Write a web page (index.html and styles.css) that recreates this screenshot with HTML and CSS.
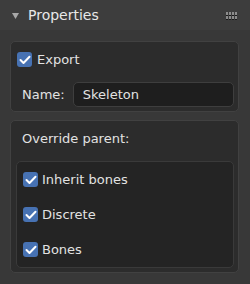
FILE: index.html
```html
<!DOCTYPE html>
<html>
<head>
<meta charset="utf-8">
<link rel="stylesheet" href="styles.css">
</head>
<body>
<div class="panel">
  <div class="header">
    <svg class="tri" width="7" height="6" viewBox="0 0 7 6"><path d="M0 0 L7 0 L3.5 6 Z" fill="#a8a8a8"/></svg>
    <span class="title">Properties</span>
    <svg class="grip" width="12" height="8" viewBox="0 0 12 8">
      <g fill="#8c8c8c">
        <rect x="0" y="0" width="2" height="3"/><rect x="3" y="0" width="2" height="3"/><rect x="6" y="0" width="2" height="3"/><rect x="9" y="0" width="2" height="3"/>
        <rect x="0" y="4" width="2" height="3"/><rect x="3" y="4" width="2" height="3"/><rect x="6" y="4" width="2" height="3"/><rect x="9" y="4" width="2" height="3"/>
      </g>
      <g fill="#1a1a1a">
        <rect x="0" y="3" width="2" height="1"/><rect x="3" y="3" width="2" height="1"/><rect x="6" y="3" width="2" height="1"/><rect x="9" y="3" width="2" height="1"/>
        <rect x="0" y="7" width="2" height="1"/><rect x="3" y="7" width="2" height="1"/><rect x="6" y="7" width="2" height="1"/><rect x="9" y="7" width="2" height="1"/>
      </g>
    </svg>
  </div>
  <div class="content">
    <div class="box">
      <div class="row check-row">
        <span class="cb"><svg width="12" height="10" viewBox="0 0 12 10"><path d="M1.5 5 L4.5 8 L10.5 1.8" fill="none" stroke="#fff" stroke-width="2" stroke-linecap="round" stroke-linejoin="round"/></svg></span>
        <span class="label">Export</span>
      </div>
      <div class="row name-row">
        <span class="label name-label">Name:</span>
        <div class="field">Skeleton</div>
      </div>
    </div>
    <div class="box">
      <div class="row">
        <span class="label name-label">Override parent:</span>
      </div>
      <div class="inner">
        <div class="row item">
          <span class="cb"><svg width="12" height="10" viewBox="0 0 12 10"><path d="M1.5 5 L4.5 8 L10.5 1.8" fill="none" stroke="#fff" stroke-width="2" stroke-linecap="round" stroke-linejoin="round"/></svg></span>
          <span class="label">Inherit bones</span>
        </div>
        <div class="row item">
          <span class="cb"><svg width="12" height="10" viewBox="0 0 12 10"><path d="M1.5 5 L4.5 8 L10.5 1.8" fill="none" stroke="#fff" stroke-width="2" stroke-linecap="round" stroke-linejoin="round"/></svg></span>
          <span class="label">Discrete</span>
        </div>
        <div class="row item">
          <span class="cb"><svg width="12" height="10" viewBox="0 0 12 10"><path d="M1.5 5 L4.5 8 L10.5 1.8" fill="none" stroke="#fff" stroke-width="2" stroke-linecap="round" stroke-linejoin="round"/></svg></span>
          <span class="label">Bones</span>
        </div>
      </div>
    </div>
  </div>
</div>
</body>
</html>
```
FILE: styles.css
```css
html, body {
  margin: 0;
  padding: 0;
  background: #383838;
  font-family: "DejaVu Sans", sans-serif;
  color: #dcdcdc;
}
.panel {
  width: 250px;
  height: 284px;
  background: #383838;
}
.header {
  height: 30px;
  background: #3d3d3d;
  display: flex;
  align-items: center;
  padding: 0 12px 0 12px;
  box-sizing: border-box;
}
.tri {
  margin-top: 1px;
}
.title {
  font-size: 14px;
  color: #e8e8e8;
  margin-left: 9px;
  flex: 1;
  margin-top: -1px;
}
.grip {
  margin-top: 1px;
}
.content {
  padding: 11px 11px 0 10px;
  display: flex;
  flex-direction: column;
  gap: 8px;
}
.box {
  background: #2c2c2c;
  border: 1px solid #414141;
  border-radius: 5px;
  padding: 5px 4px 4px 6px;
  display: flex;
  flex-direction: column;
  gap: 10px;
}
.row {
  display: flex;
  align-items: center;
  height: 25px;
}
.cb {
  width: 15px;
  height: 15px;
  border-radius: 3px;
  background: #4772b3;
  display: flex;
  align-items: center;
  justify-content: center;
  flex: none;
}
.label {
  font-size: 13px;
  color: #e2e2e2;
  margin-left: 5px;
}
.name-label {
  margin-left: 5px;
}
.field {
  margin-left: 8px;
  flex: 1;
  height: 25px;
  box-sizing: border-box;
  background: #1e1e1e;
  border: 1px solid #3e3e3e;
  border-radius: 5px;
  font-size: 13px;
  color: #e2e2e2;
  display: flex;
  align-items: center;
  padding-left: 9px;
}
.box:nth-child(2) {
  padding-left: 5px;
}
.box:nth-child(2) > .row .name-label {
  margin-left: 6px;
}
.inner {
  background: #242424;
  border: 1px solid #3a3a3a;
  border-radius: 5px;
  padding: 0 0 0 6px;
}
.item {
  height: 35px;
}
.item .label {
  margin-left: 4px;
}
```
